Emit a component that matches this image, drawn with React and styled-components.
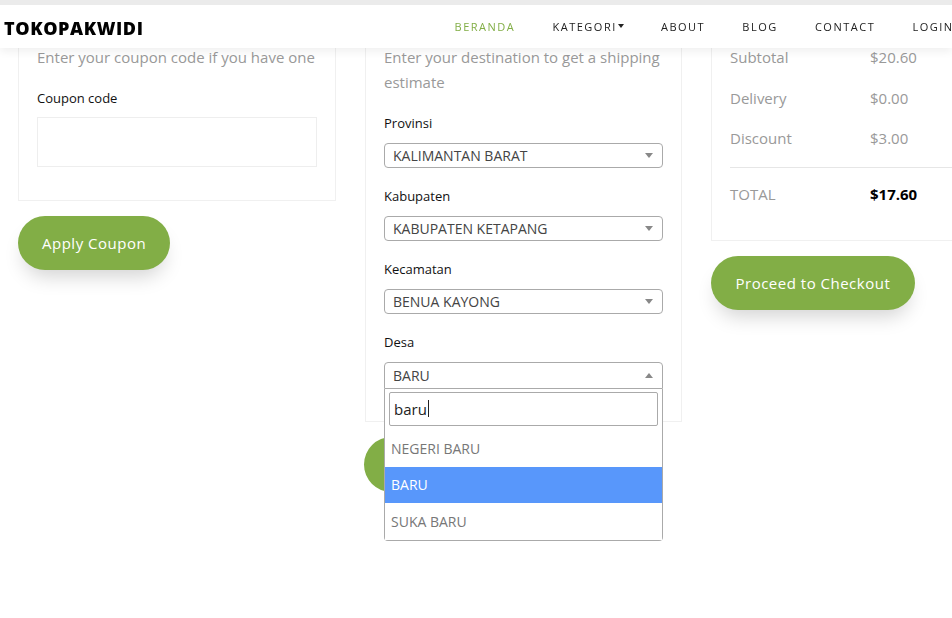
import React from "react";
import styled, { createGlobalStyle } from "styled-components";

const Global = createGlobalStyle`
  html, body { margin: 0; padding: 0; background: #fff; }
  body { font-family: "Open Sans", "Liberation Sans", sans-serif; overflow: hidden; }
  * { box-sizing: border-box; }
`;

const TopStrip = styled.div`
  position: fixed; top: 0; left: 0; right: 0; height: 5px; background: #ebebeb; z-index: 11;
`;

const Nav = styled.nav`
  position: fixed; top: 5px; left: 0; right: 0; height: 43px; background: #fff;
  display: flex; align-items: center;
  padding-left: 4px; box-shadow: 0 4px 8px rgba(0,0,0,0.06); z-index: 10;
`;

const Logo = styled.div`
  font-family: "Open Sans", sans-serif; font-weight: 800; font-size: 18px; color: #000;
  letter-spacing: 0.6px; margin-top: 2px; width: 138px; white-space: nowrap;
`;

const Menu = styled.ul`
  display: flex; list-style: none; margin: 0 0 0 294px; padding: 0; white-space: nowrap;
`;

const MenuItem = styled.li`
  font-size: 11px; letter-spacing: 1.5px; color: ${p => (p.active ? "#82ae46" : "#222")};
  padding: 0 18.6px; display: flex; align-items: center; gap: 2px;
`;

const Caret = styled.span`
  border-left: 3px solid transparent; border-right: 3px solid transparent; border-top: 4px solid #222;
  margin-left: -1px; margin-top: -2px;
`;

const Main = styled.main`
  display: grid; grid-template-columns: 318px 317px 260px;
  column-gap: 29px;
  padding: 0 0 160px 18px; margin-top: -20px; width: 1000px;
`;

const Column = styled.div`
  display: flex; flex-direction: column; align-items: flex-start;
`;

const Card = styled.div`
  width: 100%; border: 1px solid #f0f0f0; padding: 64px 18px ${p => p.pb || "33px"};
`;

const Lead = styled.p`
  margin: 0; font-size: 15px; color: #999; line-height: 25px;
`;

const Label = styled.label`
  display: block; font-size: 13px; color: #111; line-height: 18px;
  margin: ${p => (p.first ? "18.5px" : "19px")} 0 ${p => p.mb || "11px"};
`;

const TextInput = styled.div`
  height: 50px; border: 1px solid #eee; width: 280px;
`;

const Button = styled.button`
  margin-top: 15px; height: 54px; border: none; border-radius: 27px; background: #82ae46;
  color: #fff; font-family: inherit; font-size: 15px; font-weight: 500; letter-spacing: 0.5px;
  padding: 0 ${p => p.px || "24px"};
  box-shadow: 0 12px 20px -6px rgba(0,0,0,0.18);
`;

const SelectWrap = styled.div`
  position: relative; width: 279px;
`;

const Select = styled.div`
  height: ${p => (p.open ? "27px" : "25px")}; border: 1px solid #aaa; border-radius: ${p => (p.open ? "4px 4px 0 0" : "4px")};
  display: flex; align-items: center; justify-content: space-between; padding: 0 8px;
  font-size: 14px; color: #444; background: #fff;
`;

const Arrow = styled.span`
  border-left: 4px solid transparent; border-right: 4px solid transparent;
  ${p => (p.up ? "border-bottom: 5px solid #888;" : "border-top: 5px solid #888;")}
  margin-right: 1px;
`;

const Dropdown = styled.div`
  position: absolute; left: 0; right: 0; top: 27px; background: #fff; border: 1px solid #aaa; border-top: none;
  border-radius: 0 0 4px 4px; z-index: 5;
`;

const Search = styled.div`
  margin: 3px 4px 4.5px 4px; height: 34px; border: 1px solid #aaa; border-radius: 2px;
  display: flex; align-items: center; padding-left: 4px; font-size: 15px; color: #222;
`;

const Cursor = styled.span`
  display: inline-block; width: 1px; height: 17px; background: #222; margin-left: 1px;
`;

const Option = styled.div`
  height: 36.6px; display: flex; align-items: center; padding-left: 6px; font-size: 14px;
  color: ${p => (p.hl ? "#fff" : "#777")}; background: ${p => (p.hl ? "#5897fb" : "#fff")};
`;

const HiddenButton = styled.div`
  margin-top: 15px; height: 55px; width: 150px; border-radius: 28px; background: #82ae46; margin-left: -1px;
`;

const Row = styled.div`
  display: grid; grid-template-columns: 140px 1fr; font-size: 15px; color: #999;
  line-height: 25px; margin-bottom: ${p => p.mb || "15.5px"};
`;

const Value = styled.span`
  color: ${p => (p.strong ? "#000" : "#999")}; font-weight: ${p => (p.strong ? 700 : 400)};
`;

const Divider = styled.hr`
  border: none; border-top: 1px solid #e6e6e6; margin: 0 0 14.5px; width: 260px;
`;

export default function App() {
  return (
    <>
      <Global />
      <TopStrip />
      <Nav>
        <Logo>TOKOPAKWIDI</Logo>
        <Menu>
          <MenuItem active>BERANDA</MenuItem>
          <MenuItem>KATEGORI<Caret /></MenuItem>
          <MenuItem>ABOUT</MenuItem>
          <MenuItem>BLOG</MenuItem>
          <MenuItem>CONTACT</MenuItem>
          <MenuItem>LOGIN</MenuItem>
        </Menu>
      </Nav>
      <Main>
        <Column>
          <Card>
            <Lead>Enter your coupon code if you have one</Lead>
            <Label first mb="10px">Coupon code</Label>
            <TextInput />
          </Card>
          <Button>Apply Coupon</Button>
        </Column>
        <Column>
          <Card pb="32px">
            <Lead>Enter your destination to get a shipping estimate</Lead>
            <Label first>Provinsi</Label>
            <SelectWrap><Select>KALIMANTAN BARAT<Arrow /></Select></SelectWrap>
            <Label>Kabupaten</Label>
            <SelectWrap><Select>KABUPATEN KETAPANG<Arrow /></Select></SelectWrap>
            <Label>Kecamatan</Label>
            <SelectWrap><Select>BENUA KAYONG<Arrow /></Select></SelectWrap>
            <Label>Desa</Label>
            <SelectWrap>
              <Select open>BARU<Arrow up /></Select>
              <Dropdown>
                <Search>baru<Cursor /></Search>
                <Option>NEGERI BARU</Option>
                <Option hl>BARU</Option>
                <Option>SUKA BARU</Option>
              </Dropdown>
            </SelectWrap>
          </Card>
          <HiddenButton />
        </Column>
        <Column>
          <Card pb="33px">
            <Row>Subtotal<Value>$20.60</Value></Row>
            <Row>Delivery<Value>$0.00</Value></Row>
            <Row>Discount<Value>$3.00</Value></Row>
            <Divider />
            <Row mb="0">TOTAL<Value strong>$17.60</Value></Row>
          </Card>
          <Button px="24.5px">Proceed to Checkout</Button>
        </Column>
      </Main>
    </>
  );
}
